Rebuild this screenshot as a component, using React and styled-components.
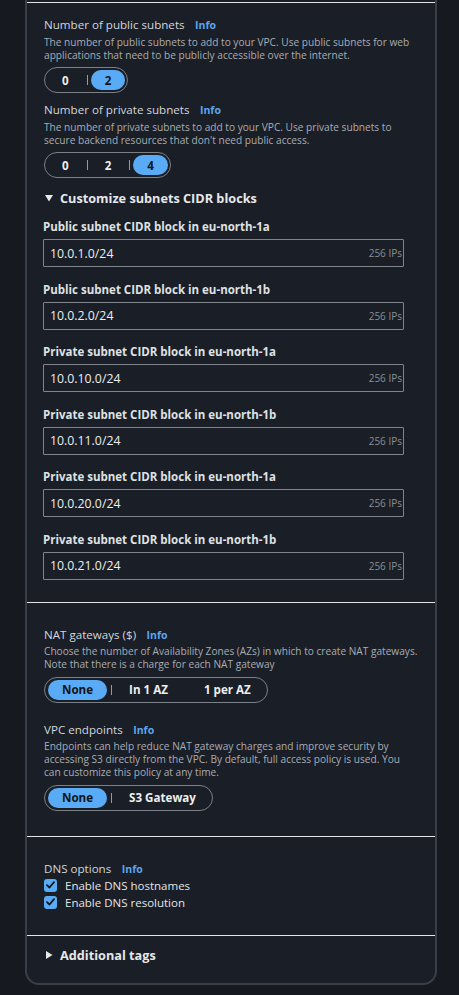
import React from 'react';
import styled, { createGlobalStyle } from 'styled-components';

const GlobalStyle = createGlobalStyle`
  html, body { margin: 0; padding: 0; background: #16191f; }
  body { font-family: "Open Sans", "Noto Sans", sans-serif; color: #d5d8dc; }
  * { box-sizing: border-box; }
`;

const Page = styled.div`
  padding: 0 22px 10px 25px;
`;

const Card = styled.div`
  padding-top: 2px;
  background: #1a1e26;
  border: 2px solid #3a3e46;
  border-top: none;
  border-radius: 0 0 14px 14px;
`;

const Section = styled.section`
  display: flex;
  flex-direction: column;
  align-items: flex-start;
  border-top: 1px solid #e4e6e9;
  padding: ${p => p.$top}px 16px ${p => p.$bottom}px 17px;
`;

const LabelRow = styled.div`
  display: flex;
  align-items: baseline;
  gap: 10.5px;
  margin-top: ${p => p.$gap || 0}px;
  font-size: 11.6px;
  line-height: 16px;
  color: #d3d6da;
`;

const Info = styled.a`
  font-size: 10.5px;
  font-weight: 700;
  color: #5aa7ee;
  text-decoration: none;
`;

const Description = styled.p`
  margin: 2.5px 0 0;
  font-size: 10.15px;
  line-height: 13px;
  color: #a9adb4;
`;

const Segmented = styled.div`
  display: inline-flex;
  align-items: center;
  height: 26px;
  margin-top: 5.5px;
  padding: 0 2px 0 3px;
  border: 1px solid #7b8088;
  border-radius: 13px;
`;

const Segment = styled.span`
  display: flex;
  align-items: center;
  justify-content: center;
  height: 20px;
  padding: 0 14px;
  border-radius: 10px;
  font-size: 11.6px;
  font-weight: 700;
  background: ${p => (p.$selected ? '#5aabf5' : 'transparent')};
  color: ${p => (p.$selected ? '#0f141a' : '#eceef1')};
`;

const Separator = styled.span`
  width: 1px;
  height: 10px;
  margin: 0 3px 0 4px;
  background: ${p => (p.$hidden ? 'transparent' : '#959aa1')};
`;

const ExpandHeader = styled.div`
  display: flex;
  align-items: center;
  gap: 7px;
  margin-top: ${p => p.$gap || 0}px;
  padding-left: 1px;
  font-size: 12.7px;
  line-height: 16px;
  font-weight: 700;
  color: #e6e8eb;
`;

const FieldLabel = styled.div`
  margin-top: ${p => p.$gap}px;
  margin-left: -1px;
  font-size: 11.5px;
  line-height: 14px;
  font-weight: 700;
  color: #dfe1e4;
`;

const InputBox = styled.div`
  display: flex;
  align-items: center;
  width: 361px;
  height: 28px;
  margin-top: 5px;
  margin-left: -1px;
  padding: 0 1px 0 6px;
  border: 1px solid #80848b;
  border-radius: 1px;
`;

const TextInput = styled.input`
  flex: 1;
  min-width: 0;
  border: none;
  outline: none;
  background: transparent;
  padding: 0;
  font-family: inherit;
  font-size: 12.3px;
  color: #eceef0;
`;

const Suffix = styled.span`
  font-size: 10px;
  color: #8a8e95;
`;

const CheckRow = styled.label`
  display: flex;
  align-items: center;
  gap: 8px;
  font-size: 11.5px;
  line-height: 17px;
  color: #e3e5e8;
`;

const Box = styled.span`
  display: flex;
  align-items: center;
  justify-content: center;
  width: 13px;
  height: 13px;
  border-radius: 3px;
  background: #5aabf5;
`;

const Triangle = ({ dir }) => (
  <svg width="8" height="8" viewBox="0 0 8 8">
    {dir === 'down' ? (
      <path d="M0 1 H8 L4 7.5 Z" fill="#e6e8eb" />
    ) : (
      <path d="M1 0 V8 L7.5 4 Z" fill="#e6e8eb" />
    )}
  </svg>
);

const Field = ({ label, gap, children }) => (
  <>
    <LabelRow $gap={gap}>
      <span>{label}</span>
      <Info href="#">Info</Info>
    </LabelRow>
    {children}
  </>
);

const SegControl = ({ options, selected, hidden = [] }) => (
  <Segmented>
    {options.map((o, i) => (
      <React.Fragment key={o}>
        {i > 0 && <Separator $hidden={hidden.includes(i)} />}
        <Segment $selected={o === selected}>{o}</Segment>
      </React.Fragment>
    ))}
  </Segmented>
);

const cidrs = [
  ['Public subnet CIDR block in eu-north-1a', '10.0.1.0/24'],
  ['Public subnet CIDR block in eu-north-1b', '10.0.2.0/24'],
  ['Private subnet CIDR block in eu-north-1a', '10.0.10.0/24'],
  ['Private subnet CIDR block in eu-north-1b', '10.0.11.0/24'],
  ['Private subnet CIDR block in eu-north-1a', '10.0.20.0/24'],
  ['Private subnet CIDR block in eu-north-1b', '10.0.21.0/24'],
];

const Check = ({ children }) => (
  <CheckRow>
    <Box>
      <svg width="9" height="8" viewBox="0 0 9 8">
        <path d="M1 4.2 L3.5 6.5 L8 1.2" stroke="#0f141a" strokeWidth="1.8" fill="none" strokeLinecap="round" strokeLinejoin="round" />
      </svg>
    </Box>
    {children}
  </CheckRow>
);

export default function App() {
  return (
    <>
      <GlobalStyle />
      <Page>
        <Card>
          <Section $top={14} $bottom={22}>
            <Field label="Number of public subnets">
              <Description>
                The number of public subnets to add to your VPC. Use public subnets for web applications that need to be publicly accessible over the internet.
              </Description>
              <SegControl options={['0', '2']} selected="2" />
            </Field>
            <Field label="Number of private subnets" gap={9}>
              <Description>
                The number of private subnets to add to your VPC. Use private subnets to secure backend resources that don't need public access.
              </Description>
              <SegControl options={['0', '2', '4']} selected="4" />
            </Field>
            <ExpandHeader $gap={12}>
              <Triangle dir="down" />
              Customize subnets CIDR blocks
            </ExpandHeader>
            {cidrs.map(([label, value], i) => (
              <React.Fragment key={i}>
                <FieldLabel $gap={i === 0 ? 14 : 15.5}>{label}</FieldLabel>
                <InputBox>
                  <TextInput readOnly value={value} />
                  <Suffix>256 IPs</Suffix>
                </InputBox>
              </React.Fragment>
            ))}
          </Section>
          <Section $top={24} $bottom={25}>
            <Field label="NAT gateways ($)">
              <Description>
                Choose the number of Availability Zones (AZs) in which to create NAT gateways. Note that there is a charge for each NAT gateway
              </Description>
              <SegControl options={['None', 'In 1 AZ', '1 per AZ']} selected="None" hidden={[2]} />
            </Field>
            <Field label="VPC endpoints" gap={19}>
              <Description>
                Endpoints can help reduce NAT gateway charges and improve security by accessing S3 directly from the VPC. By default, full access policy is used. You can customize this policy at any time.
              </Description>
              <SegControl options={['None', 'S3 Gateway']} selected="None" />
            </Field>
          </Section>
          <Section $top={24} $bottom={24}>
            <Field label="DNS options">
              <Check>Enable DNS hostnames</Check>
              <Check>Enable DNS resolution</Check>
            </Field>
          </Section>
          <Section $top={11} $bottom={20}>
            <ExpandHeader>
              <Triangle dir="right" />
              Additional tags
            </ExpandHeader>
          </Section>
        </Card>
      </Page>
    </>
  );
}
